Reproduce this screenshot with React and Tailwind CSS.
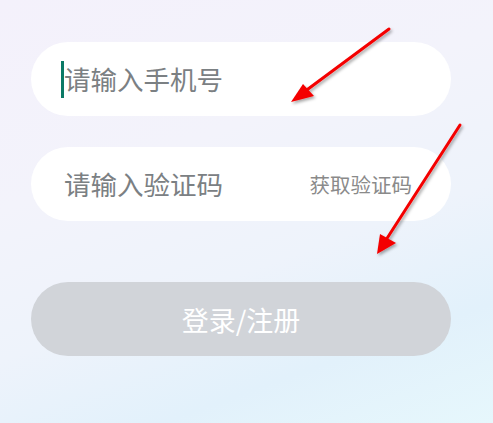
export default function App() {
  const font = { fontFamily: '"Noto Sans CJK SC", "Noto Sans", sans-serif' };

  return (
    <div
      className="relative w-[493px] h-[423px] overflow-hidden bg-[linear-gradient(160deg,#f4f1fb_0%,#f3f3fb_35%,#eef3fb_60%,#e2f1fb_80%,#e6f7fc_100%)]"
      style={font}
    >
      <div className="flex flex-col pt-[42px] ml-[31px] w-[420px]">
        <div className="h-[74px] rounded-full bg-white flex items-center pl-[30px] pr-[40px]">
          <span className="w-[3px] h-[37px] bg-[#0b7a66]" />
          <span className="text-[26.5px] leading-none text-[#7b8083]">请输入手机号</span>
        </div>

        <div className="mt-[31px] h-[74px] rounded-full bg-white flex items-center justify-between pl-[33px] pr-[39px]">
          <span className="text-[26.5px] leading-none text-[#7b8083]">请输入验证码</span>
          <span className="text-[20.5px] leading-none text-[#8a8a8a]">获取验证码</span>
        </div>

        <div className="mt-[61px] h-[74px] rounded-full bg-[#d1d4d9] flex items-center justify-center">
          <span className="text-[27px] leading-none text-white">登录/注册</span>
        </div>
      </div>

      <svg
        className="absolute inset-0 pointer-events-none"
        width="493"
        height="423"
        viewBox="0 0 493 423"
      >
        <defs>
          <filter id="sh" x="-20%" y="-20%" width="140%" height="140%">
            <feDropShadow dx="1.5" dy="2" stdDeviation="1.5" floodColor="#000" floodOpacity="0.35" />
          </filter>
        </defs>
        <g filter="url(#sh)">
          <line x1="389" y1="29" x2="300" y2="95" stroke="#f40000" strokeWidth="3" strokeLinecap="round" />
          <polygon points="291,102 303,84 314,96" fill="#f40000" />
          <line x1="460" y1="125" x2="384" y2="243" stroke="#f40000" strokeWidth="3" strokeLinecap="round" />
          <polygon points="377,254 380,234 396,243" fill="#f40000" />
        </g>
      </svg>
    </div>
  );
}
